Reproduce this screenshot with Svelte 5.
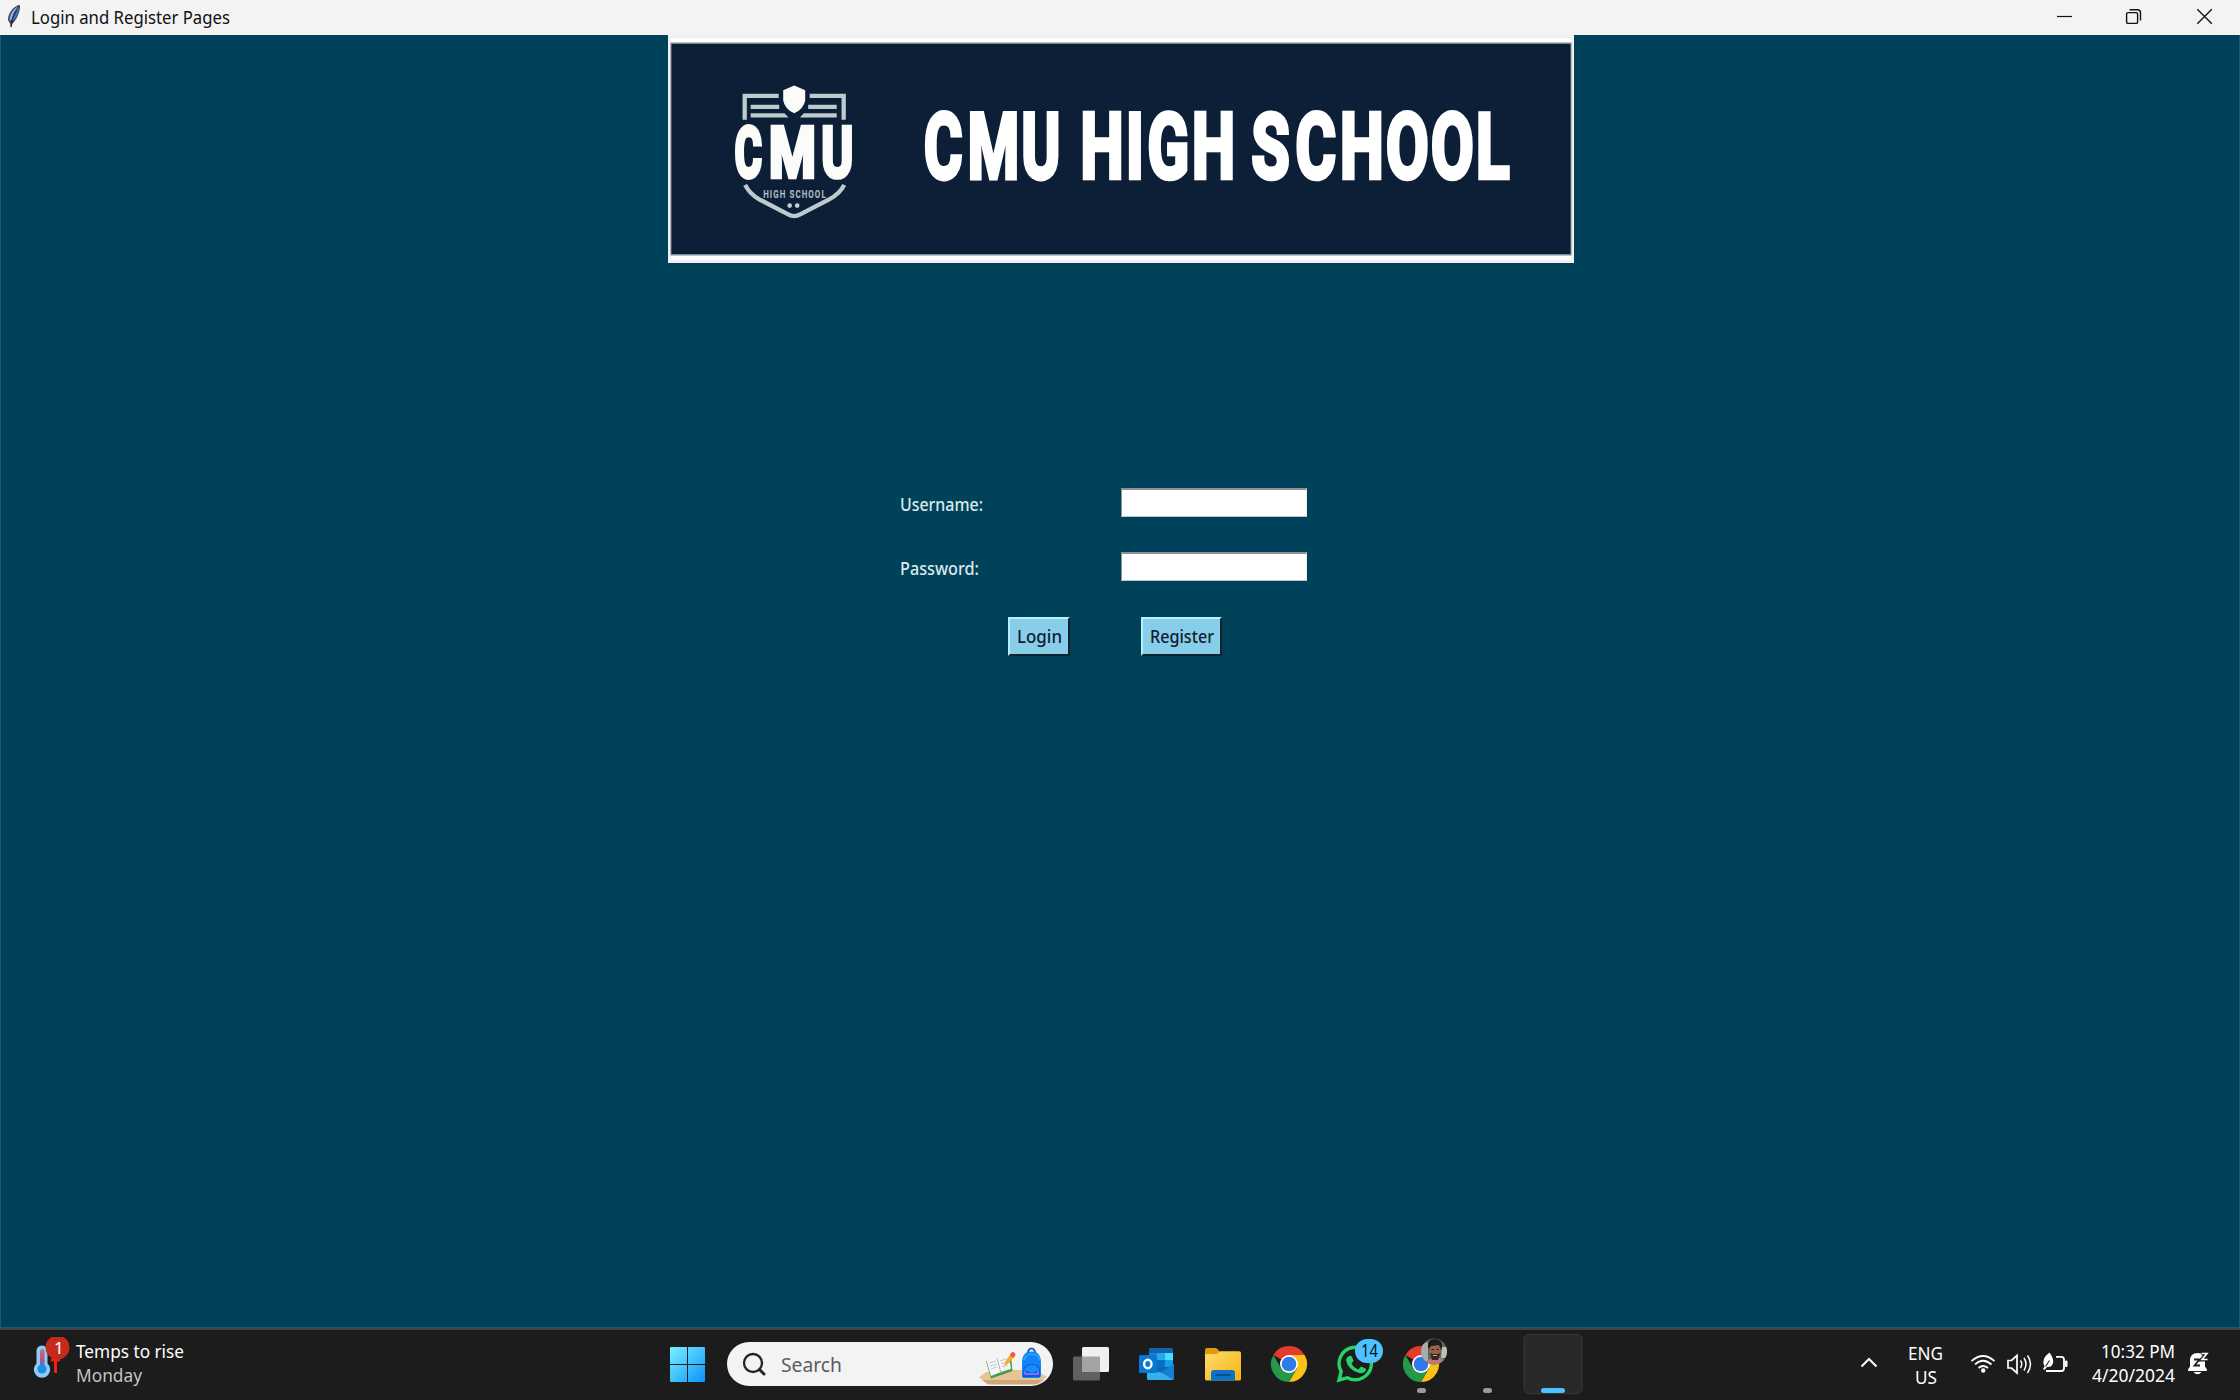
<script>
  const title = 'Login and Register Pages';
  // Each word is condensed horizontally and its glyphs are spaced one by one.
  const banner = [
    { text: 'CMU', x: 257, scale: 0.645, glyphs: '-1.4 66.1 149.5' },
    { text: 'HIGH', x: 414.5, scale: 0.67, glyphs: '-3.1 65.1 97 163.4' },
    { text: 'SCHOOL', x: 584, scale: 0.68, glyphs: '-0.8 63.9 129.3 196.9 263.1 329.4' }
  ];
  const fields = [
    { label: 'Username:', width: 83 },
    { label: 'Password:', width: 79 }
  ];
</script>

{#snippet fit(text, width, size, color)}
  <svg class="fit" width={width} height="24" viewBox="0 0 {width} 24">
    <text x="0" y="18" textLength={width} lengthAdjust="spacingAndGlyphs" font-size={size} fill={color}>{text}</text>
  </svg>
{/snippet}

{#snippet chrome()}
  <path d="M33 34L17.4 25A18 18 0 0 1 48.6 25Z" fill="#e33b2e" />
  <path d="M33 25H48.6A18 18 0 0 1 33 52L40.8 38.5Z" fill="#fbc116" />
  <path d="M17.4 25L25.2 38.5L33 43L40.8 38.5L33 52A18 18 0 0 1 17.4 25Z" fill="#279847" />
  <circle cx="33" cy="34" r="9" fill="#fff" />
  <circle cx="33" cy="34" r="7.3" fill="#3079ea" />
{/snippet}

<div class="screen">
  <header class="titlebar">
    <svg class="feather" width="14" height="26" viewBox="0 0 14 26">
      <path d="M11.500 1C6 3 1 9 1 16L3 19.500L4 24L5.500 19.500C10 16 13.500 6 13 1.500Z" fill="#3f434b" />
      <path d="M11 2.500C7 4 2.500 10 2.500 17L5 15C6 9 8.500 6 11 2.500Z" fill="#89b6eb" />
      <path d="M12 3C12 9 9.500 14 5.500 17.500C6 12 8 7 12 3Z" fill="#3f74c4" />
      <path d="M10 6L6 13L4 23" fill="none" stroke="#24272d" stroke-width="1" />
    </svg>
    {@render fit(title, 199, 18, '#111')}
    <div class="controls">
      <svg width="70" height="35" viewBox="0 0 70 35"><path d="M27 16.500H42" stroke="#111" stroke-width="1.200" /></svg>
      <svg width="70" height="35" viewBox="0 0 70 35" fill="none" stroke="#111" stroke-width="1.400">
        <rect x="26.600" y="12.600" width="11" height="10.800" rx="1.500" />
        <path d="M29.500 9.700H37.500Q40.500 9.700 40.500 12.700V20.500" />
      </svg>
      <svg width="70" height="35" viewBox="0 0 70 35"><path d="M27.300 9.300L41.800 23.800M41.800 9.300L27.300 23.800" stroke="#111" stroke-width="1.300" /></svg>
    </div>
  </header>

  <main>
    <svg class="banner" width="906" height="228" viewBox="0 0 906 228">
      <rect width="906" height="228" fill="#f0f0f0" />
      <rect x="3" y="3" width="900" height="222" fill="#fff" />
      <rect x="2.500" y="7.500" width="901" height="213" fill="#7d8797" />
      <rect x="3.500" y="9" width="899" height="210" fill="#0c1f37" />
      <g transform="translate(-.8 .3)">
        <g fill="none" stroke="#bccbce" stroke-width="4.300">
          <path d="M77.500 84.500V60.500H111.500M142.500 60.500H176.500V84.500" />
          <path d="M83.500 71.500H112M141 71.500H169.500M83.500 80H121M133 80H169.500" />
          <path d="M78 149.500Q82 158 92 164L121 179Q127 182.500 133 179L162 164Q173 158 177 149.500" />
        </g>
        <path d="M127 46L141.500 51V65Q140 79 127 86Q114 79 112.500 65V51Z" fill="#0c1f37" />
        <path d="M127 50.200L138 55V65Q136.500 74 127 78Q117.500 74 116 65V55Z" fill="#fbfbf9" />
        <text class="small" transform="translate(96 162.600) scale(.72 1)">HIGH SCHOOL</text>
        <circle cx="122.500" cy="170.300" r="2.300" fill="#c5d0d1" />
        <circle cx="130" cy="170.300" r="2.300" fill="#c5d0d1" />
      </g>
      <g class="crest">
        <text transform="translate(66.8 142) scale(.59 1)">C</text>
        <text transform="translate(101 142) scale(.765 1)">M</text>
        <text transform="translate(153.600 142) scale(.685 1)">U</text>
      </g>
      <g class="name">
        {#each banner as word}
          <text transform="translate({word.x} 143.4) scale({word.scale} 1)" x={word.glyphs} y="0">{word.text}</text>
        {/each}
      </g>
    </svg>

    <form onsubmit={(e) => e.preventDefault()}>
      {#each fields as field}
        <label>
          <span>{@render fit(field.label, field.width, 18, '#dce8ea')}</span>
          <input type="text" aria-label={field.label} />
        </label>
      {/each}
      <div class="actions">
        <button type="button">{@render fit('Login', 45, 18, '#111c2c')}</button>
        <button type="button">{@render fit('Register', 64, 18, '#111c2c')}</button>
      </div>
    </form>
  </main>

  <footer class="taskbar">
    <div class="weather">
      <svg width="40" height="48" viewBox="0 0 40 48">
        <path d="M6.500 14A5.500 5.500 0 0 1 17.500 14V26.500A8.200 8.200 0 1 1 6.500 26.500Z" fill="#92c9f5" />
        <rect x="10" y="12" width="4.500" height="20" rx="2.200" fill="url(#mercury)" />
        <circle cx="12" cy="32" r="4.600" fill="#1593e0" />
        <path d="M25.500 36V22M21.500 24L25.500 20L29.500 24" fill="none" stroke="#f5200f" stroke-width="3" />
        <circle cx="27.500" cy="10.500" r="12" fill="#c42b1c" />
        <text x="24" y="16.500" font-size="17" fill="#fff">1</text>
        <defs><linearGradient id="mercury" x2="0" y2="1"><stop stop-color="#6f93b8" /><stop offset=".3" stop-color="#e0506c" /><stop offset="1" stop-color="#3878cf" /></linearGradient></defs>
      </svg>
      <div class="lines">
        {@render fit('Temps to rise', 108, 18, '#fff')}
        {@render fit('Monday', 66, 18, '#c4c4c4')}
      </div>
    </div>

    <svg class="start" width="35" height="35" viewBox="0 0 35 35">
      <defs><linearGradient id="win" gradientUnits="userSpaceOnUse" x2="35" y2="35"><stop stop-color="#7cf0ff" /><stop offset="1" stop-color="#0a93fb" /></linearGradient></defs>
      <path d="M1 0H17V17H0V1Q0 0 1 0ZM18 0H34Q35 0 35 1V17H18ZM0 18H17V35H1Q0 35 0 34ZM18 18H35V34Q35 35 34 35H18Z" fill="url(#win)" />
    </svg>

    <div class="search">
      <svg width="26" height="26" viewBox="0 0 26 26" fill="none" stroke="#242424">
        <circle cx="11" cy="11" r="9" stroke-width="2.300" /><path d="M17.500 17.500L22 22" stroke-width="3" stroke-linecap="round" />
      </svg>
      {@render fit('Search', 61, 20, '#5c5c5c')}
      <svg class="art" width="68" height="40" viewBox="0 0 68 40">
        <path d="M0 30.500L7 25L28 23H55L68 29.500L60 36.500H9Z" fill="#e7c396" />
        <path d="M3 33H65L59 36.500Q57 37.500 54 37.500H14Q9 37.500 7 36Z" fill="#cda777" />
        <path d="M7 14L32 9L33.500 24L12 31.500Z" fill="#3e9a4d" />
        <path d="M7 12L18 11L30 8L32 22L22 25L12 29Z" fill="#f5f5f8" />
        <path d="M18 11L22 26" stroke="#aeb0bb" stroke-width="1" />
        <path d="M10 16L17 14M11 19L18 17M12 22L18 20M21 14L27 12M22 17L28 15M23 20L29 18" stroke="#c3c5cf" stroke-width="1" />
        <path d="M25 19L27 13L32 7L35.500 9.500L30 16Z" fill="#f8ad2c" />
        <path d="M30.500 8L33 5Q36.500 5 36.500 8L34.500 11Z" fill="#ef5b52" />
        <path d="M48.500 8Q49 1.500 52.500 1.500Q56 1.500 56.500 8" fill="none" stroke="#1869d4" stroke-width="2" />
        <path d="M43 29V16Q43 4.500 52.500 4.500Q62 4.500 62 16V28Q62 31 59 31H45Q43 31 43 29Z" fill="#1384f5" />
        <path d="M45 13Q47 7 52.500 7Q59 7 60.500 13" fill="none" stroke="#2bacff" stroke-width="1.500" />
        <path d="M44 30V24Q45 17 53 17Q61 17 61 24V30Z" fill="#0a5bdd" />
        <path d="M45 23Q47 18 53 18Q59 18 60 23L53 26Z" fill="#168df8" />
        <path d="M46 24V27H59V24" fill="none" stroke="#a678f3" stroke-width="1.500" />
      </svg>
    </div>

    <nav class="apps">
      <svg width="66" height="70" viewBox="0 0 66 70">
        <rect x="15" y="26.500" width="27" height="24" rx="1.500" fill="#606060" />
        <rect x="24" y="17" width="27" height="25" rx="1.500" fill="#f0f0f0" />
        <path d="M24 26.500H42V42H25Q24 42 24 41Z" fill="#a3a3a3" />
      </svg>
      <svg width="66" height="70" viewBox="0 0 66 70">
        <rect x="25" y="18" width="24" height="26" rx="1.500" fill="#0f64b4" />
        <path d="M25 23H33V33H25Z" fill="#1481d2" /><path d="M33 23H41V30H33Z" fill="#28a8ea" /><path d="M41 23H49V30H41Z" fill="#50d9ff" />
        <path d="M33 30H41V37H33Z" fill="#0870c4" /><path d="M41 30H49V37H41Z" fill="#14a0e5" />
        <path d="M23 38L37 43L50 34V48Q50 50 48 50H25Q23 50 23 48Z" fill="#2496e4" />
        <path d="M50 34L37 42.500L50 49.500Z" fill="#1580d2" />
        <path d="M23 42L36 42L49 50H25Q23 50 23 48Z" fill="#36afee" />
        <rect x="15" y="25" width="18" height="18" rx="1.500" fill="#0978d4" />
        <ellipse cx="23.800" cy="34" rx="3.700" ry="4.200" fill="none" stroke="#fff" stroke-width="2.400" />
      </svg>
      <svg width="66" height="70" viewBox="0 0 66 70">
        <path d="M15 20Q15 18 17 18H25Q27 18 28 19.500L30 22L26 27H15Z" fill="#df9b08" />
        <path d="M15 24H25Q27 24 28 23L30 21.200H49Q51 21.200 51 23V49Q51 50.500 49 50.500H17Q15 50.500 15 49Z" fill="url(#folder)" />
        <path d="M21 50.500V43Q21 40 24 40H42Q45 40 45 43V50.500Z" fill="#0c72c6" />
        <path d="M26 45H40" stroke="#064c8e" stroke-width="1.800" stroke-linecap="round" />
        <defs><linearGradient id="folder" x2="1" y2="1"><stop stop-color="#ffdc70" /><stop offset="1" stop-color="#f7b20c" /></linearGradient></defs>
      </svg>
      <svg width="66" height="70" viewBox="0 0 66 70">{@render chrome()}</svg>
      <svg width="66" height="70" viewBox="0 0 66 70">
        <path d="M17 50L19.200 41.500A16.200 16.200 0 1 1 25.500 47.700Z" fill="none" stroke="#25d366" stroke-width="3.400" />
        <path d="M27 26Q29 25 30 27L31.500 30.500Q31.500 31.500 29.500 33.500Q32 38 36.500 39.500L39 36.500L43.500 38.500Q44.500 39 43.500 41Q41 44 37 43Q26 40 24 30Q24 27.500 27 26Z" fill="#25d366" />
        <rect x="33" y="9" width="28" height="24" rx="12" fill="#4cc2ff" />
        <text x="39" y="27" textLength="17" lengthAdjust="spacingAndGlyphs" font-size="18" fill="#08141b">14</text>
      </svg>
      <svg width="66" height="70" viewBox="0 0 66 70">
        {@render chrome()}
        <clipPath id="avatar"><circle cx="46" cy="21.500" r="13" /></clipPath>
        <g clip-path="url(#avatar)">
          <rect x="33" y="8" width="26" height="27" fill="#5d6663" />
          <path d="M33 15L40 12V32H33Z" fill="#a5adab" /><path d="M54 17H59V28H53Z" fill="#b7c5b8" />
          <path d="M36 35Q38 28 44 29L52 28Q57 29 58 35Z" fill="#b87b79" />
          <ellipse cx="47" cy="21" rx="5.500" ry="7.500" fill="#996249" />
          <path d="M40.500 19Q38 9 47 9Q56 10 53.500 20L51 15L43 16Z" fill="#1d1b1d" />
          <path d="M42 23L44 30H50L52.500 23L49 24H45Z" fill="#3b2721" /><path d="M45 25.500H49" stroke="#c0a89c" />
          <path d="M43.500 19.500H46M48.500 19.500H51" stroke="#2c1a16" />
        </g>
        <rect x="29" y="58" width="9" height="5" rx="2.500" fill="#9a9a9a" />
      </svg>
      <svg width="66" height="70" viewBox="0 0 66 70"><rect x="29" y="58" width="9" height="5" rx="2.500" fill="#9a9a9a" /></svg>
      <svg width="66" height="70" viewBox="0 0 66 70">
        <rect x="4" y="4.500" width="58" height="59" rx="5.500" fill="#292929" stroke="#323232" stroke-width="1.500" />
        <rect x="21" y="58" width="24" height="5" rx="2.500" fill="#4cc2ff" />
      </svg>
    </nav>

    <div class="tray">
      <svg width="20" height="14" viewBox="0 0 20 14"><path d="M2.500 10.500L10 3L17.500 10.500" fill="none" stroke="#fff" stroke-width="2" /></svg>
      <div class="lines lang">
        {@render fit('ENG', 35, 18, '#fff')}
        {@render fit('US', 22, 18, '#fff')}
      </div>
      <svg class="status" width="98" height="26" viewBox="0 0 98 26" fill="none" stroke="#fff" stroke-width="1.700">
        <path d="M.500 10Q12 0 23.500 10M4 13.500Q12 6 20.500 13.500M7.500 17Q12 13 17 17" />
        <circle cx="12.200" cy="19.500" r="2.200" fill="#fff" stroke="none" />
        <path d="M37 9.500H40.500L46 4.500V22L40.500 17H37Z" />
        <path d="M49.500 9.500Q52 13 49.500 17M53 7Q57 13 53 19.500M56.500 4.500Q62.500 13 56.500 22" stroke-width="1.500" />
        <path d="M85 5.800H90.500Q93 5.800 93 8.500V17Q93 20 90.500 20H75" stroke-width="1.800" />
        <path d="M94.500 10H96V15.500H94.500Z" fill="#fff" stroke-width="1" />
        <path d="M78.500 1.500Q84 9 81.500 13.500Q80 16.500 76 16L73.500 19L72 18L73.500 15.500Q69.500 8 78.500 1.500Z" fill="#fff" stroke="none" />
        <path d="M74.500 15.500L78.500 9.500" stroke="#1c1c1c" stroke-width="1.100" />
      </svg>
      <div class="lines clock">
        {@render fit('10:32 PM', 74, 18, '#fff')}
        {@render fit('4/20/2024', 83, 18, '#fff')}
      </div>
      <svg class="bell" width="22" height="26" viewBox="0 0 22 26">
        <path d="M1 18.500L3 15.500V10Q3 2 10.500 2Q18 2 18 10V15.500L20 18.500Q20.500 20 19 20H2Q.500 20 1 18.500ZM6.500 21H14.500Q10.500 25.500 6.500 21Z" fill="#fff" />
        <path d="M7 8.500H12.500L7.500 14.500H13" fill="none" stroke="#1c1c1c" stroke-width="1.800" />
        <path d="M14.500 2.500H20L15 8.500H20.500" fill="none" stroke="#1c1c1c" stroke-width="4" />
        <path d="M14.500 2.500H20L15 8.500H20.500" fill="none" stroke="#fff" stroke-width="1.600" />
      </svg>
    </div>
  </footer>
</div>

<style>
  :global(body) { margin: 0; overflow: hidden; }
  .screen { width: 2240px; height: 1400px; display: flex; flex-direction: column; background: #00425a; font-family: "Noto Sans", "Open Sans", sans-serif; }
  svg { display: block; flex: none; }
  .fit { overflow: visible; }
  .titlebar { height: 35px; box-sizing: border-box; background: #f3f3f3; display: flex; align-items: flex-start; padding-left: 7px; }
  .feather { margin: 4px 10px 0 0; }
  .titlebar .fit { margin-top: 6px; }
  .controls { display: flex; margin-left: auto; }
  main { flex: 1; min-height: 0; box-sizing: border-box; border: 1px solid #1d5a71; border-top: 0; display: flex; flex-direction: column; }
  .banner { margin-left: 666.500px; }
  .crest { font: 700 70px Roboto, sans-serif; fill: #fbfbf9; stroke: #fbfbf9; stroke-width: 4; }
  .crest text, .name text { vector-effect: non-scaling-stroke; }
  .small { font: 700 11px Roboto, sans-serif; letter-spacing: 1.500px; fill: #b4c0c5; }
  .name { font: 700 91px Roboto, sans-serif; fill: #fff; stroke: #fff; stroke-width: 4; stroke-linejoin: miter; }
  form { margin: 225px 0 0 899px; width: 406.500px; display: flex; flex-direction: column; }
  label { display: flex; justify-content: space-between; height: 29px; margin-bottom: 35px; }
  label span { padding-top: 4.500px; font-weight: 500; }
  input { box-sizing: border-box; width: 186px; height: 29px; border: 1px solid #8c9398; border-top-width: 2px; border-right-color: #e8eced; border-bottom-color: #b9c7cd; border-radius: 0; background: #fff; outline: none; }
  .actions { display: flex; gap: 71px; padding: .500px 0 0 108px; }
  button { box-sizing: border-box; height: 39px; padding: 6px 6.500px 0; border: 2px solid; border-color: #b5effc #12232b #12232b #b5effc; border-radius: 0; background: #87ceeb; display: flex; align-items: flex-start; font: inherit; font-weight: 500; }
  .taskbar { height: 72px; box-sizing: border-box; border-top: 2px solid #414347; background: #1c1c1c; display: flex; align-items: flex-start; }
  .weather { box-sizing: border-box; display: flex; width: 670px; padding: 7px 0 0 30px; }
  .weather .lines { padding: 3px 0 0 6px; }
  .lines { display: flex; flex-direction: column; }
  .start { margin-top: 17px; }
  .search { box-sizing: border-box; width: 326px; height: 44px; margin: 12px 0 0 22px; border-radius: 22px; background: #f3f3f3; display: flex; padding: 10px 6px 0 15px; }
  .search .fit { margin: 2px 0 0 13px; }
  .search .art { margin: -5px 0 0 auto; }
  .apps { display: flex; width: 528px; margin-left: 5px; }
  .tray { display: flex; align-items: flex-start; margin-left: 273px; }
  .tray > svg:first-child { margin-top: 26px; }
  .lang { width: 35px; margin: 12px 27.500px 0 29px; align-items: center; gap: -1px; }
  .status { margin-top: 21px; }
  .clock { width: 83px; margin: 10px 12.500px 0 23px; align-items: flex-end; }
  .bell { margin-top: 21px; }
</style>
